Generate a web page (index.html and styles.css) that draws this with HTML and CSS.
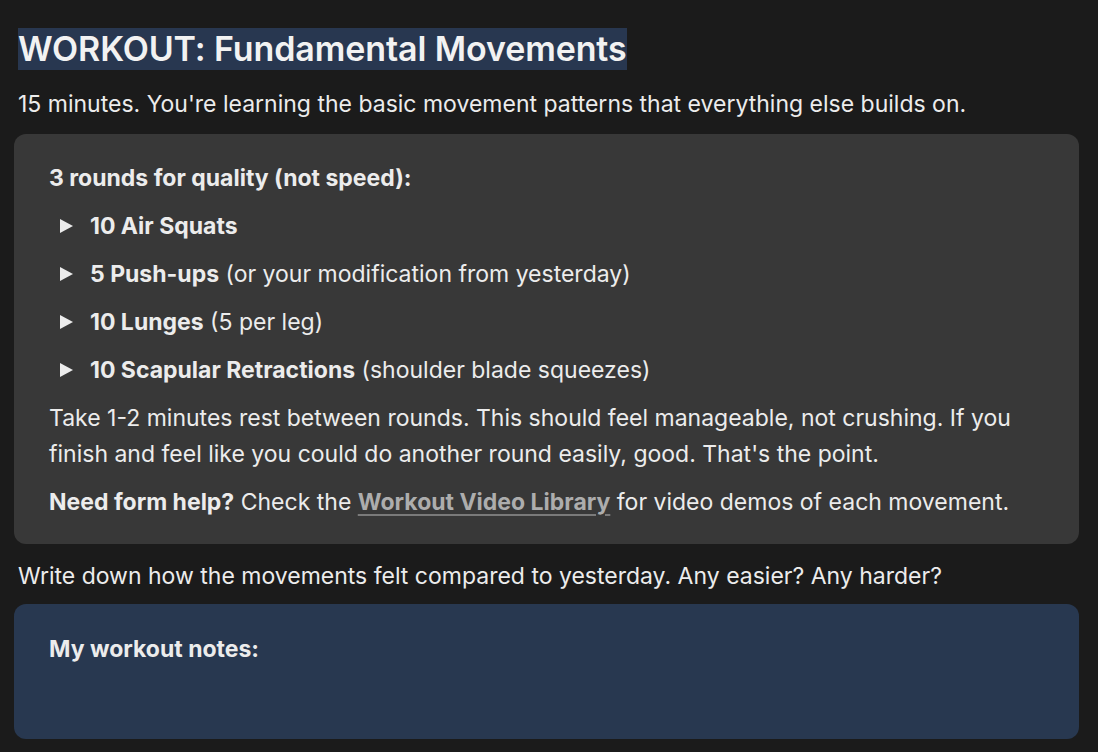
FILE: index.html
```html
<!DOCTYPE html>
<html>
<head>
<meta charset="utf-8">
<link rel="stylesheet" href="styles.css">
</head>
<body>
<div class="page">
  <h1 class="title"><span class="hl">WORKOUT: Fundamental Movements</span></h1>
  <p class="text">15 minutes. You're learning the basic movement patterns that everything else builds on.</p>
  <div class="card gray">
    <p class="lead"><strong>3 rounds for quality (not speed):</strong></p>
    <ul class="moves">
      <li><span class="tri"></span><span><strong>10 Air Squats</strong></span></li>
      <li><span class="tri"></span><span><strong>5 Push-ups</strong> (or your modification from yesterday)</span></li>
      <li><span class="tri"></span><span><strong>10 Lunges</strong> (5 per leg)</span></li>
      <li><span class="tri"></span><span><strong>10 Scapular Retractions</strong> (shoulder blade squeezes)</span></li>
    </ul>
    <p class="para">Take 1-2 minutes rest between rounds. This should feel manageable, not crushing. If you finish and feel like you could do another round easily, good. That's the point.</p>
    <p class="para"><strong>Need form help?</strong> Check the <a class="link" href="#">Workout Video Library</a> for video demos of each movement.</p>
  </div>
  <p class="text after">Write down how the movements felt compared to yesterday. Any easier? Any harder?</p>
  <div class="card blue">
    <p class="lead"><strong>My workout notes:</strong></p>
  </div>
</div>
</body>
</html>
```

FILE: styles.css
```css
html, body {
  margin: 0;
  padding: 0;
  background: #1b1b1b;
}
body {
  font-family: Inter, "Noto Sans", sans-serif;
  color: #ececec;
  font-size: 23px;
  line-height: 36px;
}
.page {
  padding: 28px 19px 0 14px;
}
.title {
  margin: 0 0 0 4px;
  font-size: 34px;
  font-weight: 600;
  line-height: 42px;
  letter-spacing: -0.1px;
}
.hl {
  background: #283750;
  color: #f2f2f2;
  padding-bottom: 1px;
}
.text {
  margin: 16px 0 0 4px;
}
.text.after {
  margin-top: 14px;
}
.card {
  border-radius: 12px;
  padding: 26px 35px 24px;
  margin-top: 12px;
}
.gray {
  background: #383838;
}
.blue {
  background: #283850;
  min-height: 84px;
  margin-top: 10px;
  padding-top: 27px;
  padding-bottom: 24px;
}
.lead {
  margin: 0;
}
strong {
  font-weight: 700;
}
.moves {
  list-style: none;
  margin: 12px 0 0 0;
  padding: 0;
}
.moves li {
  display: flex;
  align-items: center;
  height: 36px;
  margin-bottom: 12px;
}
.tri {
  width: 0;
  height: 0;
  border-top: 7px solid transparent;
  border-bottom: 7px solid transparent;
  border-left: 13px solid #ececec;
  margin: 0 17px 0 11px;
}
.para {
  margin: 0 0 12px 0;
}
.para:last-child {
  margin-bottom: 0;
}
.link {
  color: #adadad;
  font-weight: 700;
  text-decoration: underline;
  text-decoration-color: #7a7a7a;
  text-underline-offset: 4px;
}
```
